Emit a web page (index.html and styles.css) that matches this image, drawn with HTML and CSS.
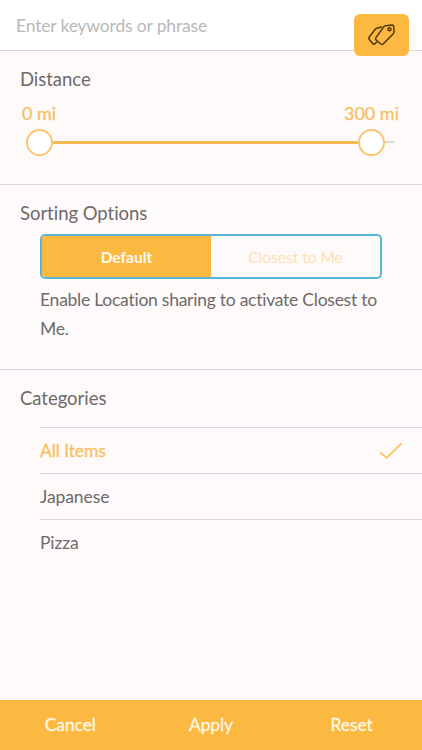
FILE: index.html
```html
<!DOCTYPE html>
<html lang="en">
<head>
<meta charset="utf-8">
<title>Filters</title>
<link rel="stylesheet" href="styles.css">
</head>
<body>
<div class="app">
  <header class="search">
    <span class="placeholder">Enter keywords or phrase</span>
    <button class="tag-button" aria-label="Tags">
      <svg width="28" height="24" viewBox="0 0 28 24" fill="none" stroke="#4d3710" stroke-width="1.5" stroke-linejoin="round" stroke-linecap="round">
        <path d="M17.5 2.7 24 2.1Q25.7 2.1 25.8 3.8L26 8.3Q26 9.8 25 10.9L15.3 20.8Q14.1 22 12.8 21L8.2 17.2Q6.8 16 7.9 14.6L15.7 3.9Q16.4 2.9 17.5 2.7Z"/>
        <path d="M13.5 4 8.8 5.2Q7.8 5.5 7.1 6.5L1.3 14Q.4 15.2 1.4 16.5L4.6 20.5Q5.5 21.6 6.8 20.8L8.5 19.4"/>
        <circle cx="21.5" cy="6.3" r="1.5"/>
      </svg>
    </button>
  </header>
  <section class="distance">
    <h2>Distance</h2>
    <div class="range-labels"><span>0 mi</span><span>300 mi</span></div>
    <div class="slider">
      <span class="knob"></span><span class="range"></span><span class="knob"></span><span class="rest"></span>
    </div>
  </section>
  <section class="sorting">
    <h2>Sorting Options</h2>
    <div class="segmented">
      <div class="segment selected">Default</div>
      <div class="segment">Closest to Me</div>
    </div>
    <p>Enable Location sharing to activate Closest to Me.</p>
  </section>
  <section class="categories">
    <h2>Categories</h2>
    <ul>
      <li class="active"><span>All Items</span>
        <svg width="24" height="20" viewBox="0 0 24 20" fill="none" stroke="#fbc566" stroke-width="1.8"><path d="M1.5 11.5 7.5 17 22.5 2.5"/></svg>
      </li>
      <li><span>Japanese</span></li>
      <li><span>Pizza</span></li>
    </ul>
  </section>
  <footer><span>Cancel</span><span>Apply</span><span>Reset</span></footer>
</div>
</body>
</html>
```
FILE: styles.css
```css
* { box-sizing: border-box; margin: 0; padding: 0; }
body { font-family: Lato, "Liberation Sans", sans-serif; font-variant-ligatures: none; color: #6c6a6b; background: #fefafa; font-size: 18px; }
.app { height: 750px; display: flex; flex-direction: column; }
.search { position: relative; height: 51px; background: #fff; border-bottom: 1px solid #dad7da; padding-left: 16px; }
.placeholder { display: block; line-height: 51px; font-size: 17.5px; letter-spacing: -.17px; color: #b9b8b9; }
.tag-button { position: absolute; left: 354px; top: 14px; width: 55px; height: 42px; border: 0; border-radius: 6px; background: #fbb941; display: flex; align-items: center; justify-content: center; }
h2 { font-size: 18.5px; font-weight: 400; line-height: 24px; padding-left: 20px; letter-spacing: -.03px; }
.distance { height: 134px; border-bottom: 1px solid #dad7da; padding-top: 16px; }
.range-labels { display: flex; justify-content: space-between; padding: 0 23px 0 22px; margin-top: 10px; line-height: 24px; font-size: 18px; color: #f5c067; -webkit-text-stroke: .3px #f5c067; }
.slider { display: flex; align-items: center; height: 28px; margin: 3px 27px 0 26px; }
.knob { width: 27px; height: 27px; flex: none; border: 2px solid #f8c671; border-radius: 50%; background: #fff; }
.range { flex: 1; height: 3px; background: #f3b953; }
.rest { width: 10px; height: 2px; background: #dad9dc; }
.sorting { height: 185px; border-bottom: 1px solid #dad7da; padding-top: 16px; }
.segmented { display: flex; width: 342px; height: 45px; margin: 9px 0 0 40px; border: 2px solid #59b5d6; border-radius: 5px; overflow: hidden; }
.segment { flex: 1; text-align: center; line-height: 42px; font-size: 15.5px; color: #fde0b5; }
.selected { background: #fbb941; color: #fffaf0; font-weight: 700; }
.sorting p { margin: 6px 40px 0; line-height: 29px; font-size: 17.5px; letter-spacing: -.25px; }
.categories { flex: 1; padding-top: 16px; }
.categories ul { list-style: none; margin: 17px 0 0 40px; }
.categories li { height: 46px; border-top: 1px solid #dad7da; display: flex; align-items: center; justify-content: space-between; padding-right: 19px; font-size: 17.5px; letter-spacing: -.1px; }
.categories .active { color: #fac05b; -webkit-text-stroke: .3px #fac05b; }
footer { height: 50px; background: #fbb941; display: grid; grid-template-columns: repeat(3, 1fr); line-height: 50px; text-align: center; color: #fff6e2; font-size: 17.5px; letter-spacing: -.1px; -webkit-text-stroke: .3px #fff6e2; }
```
